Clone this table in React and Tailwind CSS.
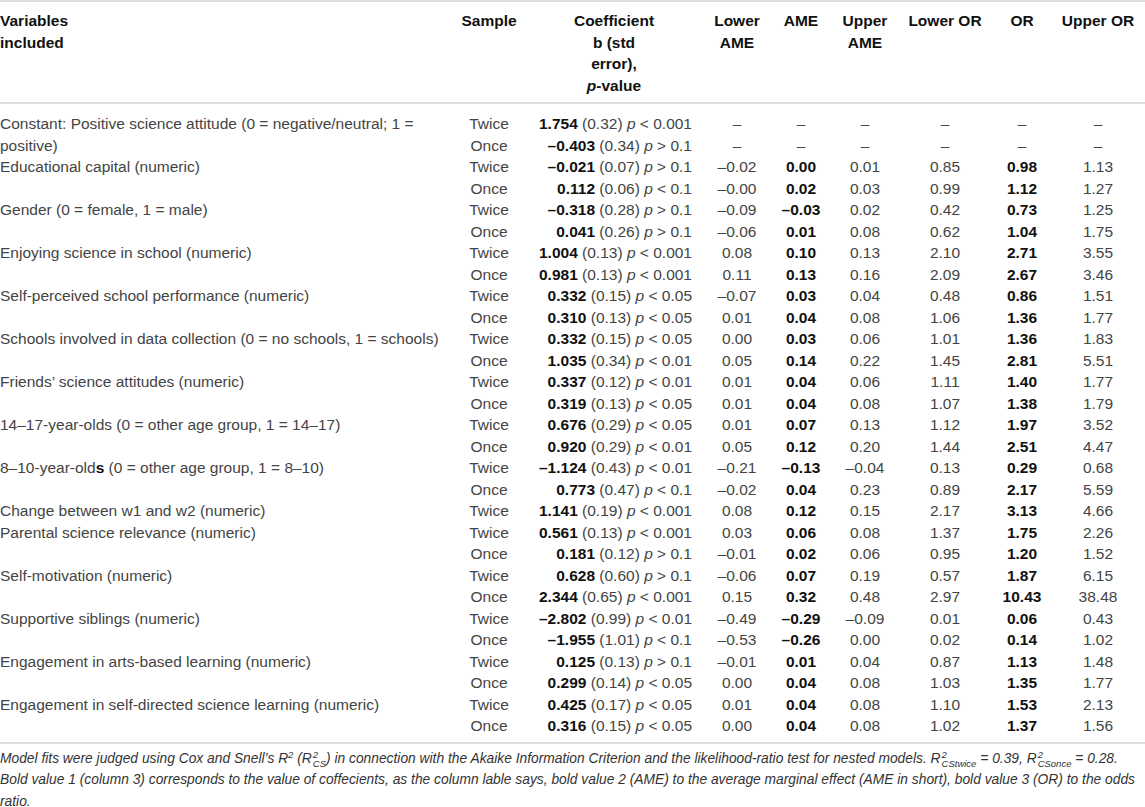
const D = '–';

const groups = [
  {
    label: 'Constant: Positive science attitude (0 = negative/neutral; 1 = positive)',
    rows: [
      ['Twice', '1.754', '0.32', '<', '0.001', D, D, D, D, D, D],
      ['Once', '–0.403', '0.34', '>', '0.1', D, D, D, D, D, D],
    ],
  },
  {
    label: 'Educational capital (numeric)',
    rows: [
      ['Twice', '–0.021', '0.07', '>', '0.1', '–0.02', '0.00', '0.01', '0.85', '0.98', '1.13'],
      ['Once', '0.112', '0.06', '<', '0.1', '–0.00', '0.02', '0.03', '0.99', '1.12', '1.27'],
    ],
  },
  {
    label: 'Gender (0 = female, 1 = male)',
    rows: [
      ['Twice', '–0.318', '0.28', '>', '0.1', '–0.09', '–0.03', '0.02', '0.42', '0.73', '1.25'],
      ['Once', '0.041', '0.26', '>', '0.1', '–0.06', '0.01', '0.08', '0.62', '1.04', '1.75'],
    ],
  },
  {
    label: 'Enjoying science in school (numeric)',
    rows: [
      ['Twice', '1.004', '0.13', '<', '0.001', '0.08', '0.10', '0.13', '2.10', '2.71', '3.55'],
      ['Once', '0.981', '0.13', '<', '0.001', '0.11', '0.13', '0.16', '2.09', '2.67', '3.46'],
    ],
  },
  {
    label: 'Self-perceived school performance (numeric)',
    rows: [
      ['Twice', '0.332', '0.15', '<', '0.05', '–0.07', '0.03', '0.04', '0.48', '0.86', '1.51'],
      ['Once', '0.310', '0.13', '<', '0.05', '0.01', '0.04', '0.08', '1.06', '1.36', '1.77'],
    ],
  },
  {
    label: 'Schools involved in data collection (0 = no schools, 1 = schools)',
    rows: [
      ['Twice', '0.332', '0.15', '<', '0.05', '0.00', '0.03', '0.06', '1.01', '1.36', '1.83'],
      ['Once', '1.035', '0.34', '<', '0.01', '0.05', '0.14', '0.22', '1.45', '2.81', '5.51'],
    ],
  },
  {
    label: 'Friends’ science attitudes (numeric)',
    rows: [
      ['Twice', '0.337', '0.12', '<', '0.01', '0.01', '0.04', '0.06', '1.11', '1.40', '1.77'],
      ['Once', '0.319', '0.13', '<', '0.05', '0.01', '0.04', '0.08', '1.07', '1.38', '1.79'],
    ],
  },
  {
    label: '14–17-year-olds (0 = other age group, 1 = 14–17)',
    rows: [
      ['Twice', '0.676', '0.29', '<', '0.05', '0.01', '0.07', '0.13', '1.12', '1.97', '3.52'],
      ['Once', '0.920', '0.29', '<', '0.01', '0.05', '0.12', '0.20', '1.44', '2.51', '4.47'],
    ],
  },
  {
    label: (
      <>
        8–10-year-old<b className="font-bold text-[#111]">s</b> (0 = other age group, 1 = 8–10)
      </>
    ),
    rows: [
      ['Twice', '–1.124', '0.43', '<', '0.01', '–0.21', '–0.13', '–0.04', '0.13', '0.29', '0.68'],
      ['Once', '0.773', '0.47', '<', '0.1', '–0.02', '0.04', '0.23', '0.89', '2.17', '5.59'],
    ],
  },
  {
    label: 'Change between w1 and w2 (numeric)',
    rows: [['Twice', '1.141', '0.19', '<', '0.001', '0.08', '0.12', '0.15', '2.17', '3.13', '4.66']],
  },
  {
    label: 'Parental science relevance (numeric)',
    rows: [
      ['Twice', '0.561', '0.13', '<', '0.001', '0.03', '0.06', '0.08', '1.37', '1.75', '2.26'],
      ['Once', '0.181', '0.12', '>', '0.1', '–0.01', '0.02', '0.06', '0.95', '1.20', '1.52'],
    ],
  },
  {
    label: 'Self-motivation (numeric)',
    rows: [
      ['Twice', '0.628', '0.60', '>', '0.1', '–0.06', '0.07', '0.19', '0.57', '1.87', '6.15'],
      ['Once', '2.344', '0.65', '<', '0.001', '0.15', '0.32', '0.48', '2.97', '10.43', '38.48'],
    ],
  },
  {
    label: 'Supportive siblings (numeric)',
    rows: [
      ['Twice', '–2.802', '0.99', '<', '0.01', '–0.49', '–0.29', '–0.09', '0.01', '0.06', '0.43'],
      ['Once', '–1.955', '1.01', '<', '0.1', '–0.53', '–0.26', '0.00', '0.02', '0.14', '1.02'],
    ],
  },
  {
    label: 'Engagement in arts-based learning (numeric)',
    rows: [
      ['Twice', '0.125', '0.13', '>', '0.1', '–0.01', '0.01', '0.04', '0.87', '1.13', '1.48'],
      ['Once', '0.299', '0.14', '<', '0.05', '0.00', '0.04', '0.08', '1.03', '1.35', '1.77'],
    ],
  },
  {
    label: 'Engagement in self-directed science learning (numeric)',
    rows: [
      ['Twice', '0.425', '0.17', '<', '0.05', '0.01', '0.04', '0.08', '1.10', '1.53', '2.13'],
      ['Once', '0.316', '0.15', '<', '0.05', '0.00', '0.04', '0.08', '1.02', '1.37', '1.56'],
    ],
  },
];

const cols = 'grid grid-cols-[455px_68px_182px_64px_64px_64px_96px_58px_94px]';

// stacked super/subscript, e.g. R with 2 over CS
function R2({ sub }) {
  return (
    <span className="whitespace-nowrap">
      R
      <span className="inline-block align-middle text-left text-[9.5px] leading-[9px] ml-[1px]">
        2
        <br />
        {sub}
      </span>
    </span>
  );
}

function Bold({ v }) {
  if (v === D) return <span>{D}</span>;
  return <b className="font-bold text-[#111]">{v}</b>;
}

export default function App() {
  return (
    <div className="w-[1145px] bg-white font-['Liberation_Sans',Arial,sans-serif] text-[15.5px] text-[#444]">
      {/* Header */}
      <div className={`${cols} border-t-2 border-b-2 border-[#dedede] pt-[8px] pb-[6px] font-bold text-[#111] leading-[21.5px]`}>
        <div>
          Variables
          <br />
          included
        </div>
        <div className="text-center">Sample</div>
        <div className="text-center">
          Coefficient
          <br />
          b (std
          <br />
          error),
          <br />
          <i>p</i>-value
        </div>
        <div className="text-center">
          Lower
          <br />
          AME
        </div>
        <div className="text-center">AME</div>
        <div className="text-center">
          Upper
          <br />
          AME
        </div>
        <div className="text-center">Lower OR</div>
        <div className="text-center">OR</div>
        <div className="text-center">Upper OR</div>
      </div>

      {/* Body */}
      <div className={`${cols} auto-rows-[21.5px] leading-[21.5px] pt-[9px] pb-[5px] border-b-2 border-[#dedede]`}>
        {groups.map((g, gi) => [
          <div key={'l' + gi} className={g.rows.length === 2 ? 'row-span-2 pr-2' : 'pr-2'}>
            {g.label}
          </div>,
          ...g.rows.map((r, ri) => [
            <div key={`s${gi}-${ri}`} className="text-center">{r[0]}</div>,
            <div key={`c${gi}-${ri}`} className="text-right pr-[13px] whitespace-nowrap">
              <b className="font-bold text-[#111]">{r[1]}</b> ({r[2]}) <i>p</i> {r[3]} {r[4]}
            </div>,
            <div key={`la${gi}-${ri}`} className="text-center">{r[5]}</div>,
            <div key={`a${gi}-${ri}`} className="text-center"><Bold v={r[6]} /></div>,
            <div key={`ua${gi}-${ri}`} className="text-center">{r[7]}</div>,
            <div key={`lo${gi}-${ri}`} className="text-center">{r[8]}</div>,
            <div key={`o${gi}-${ri}`} className="text-center"><Bold v={r[9]} /></div>,
            <div key={`uo${gi}-${ri}`} className="text-center">{r[10]}</div>,
          ]),
        ])}
      </div>

      {/* Footnote */}
      <div className="pt-[4px] italic text-[13.8px] leading-[21.5px] text-[#333]">
        <p>
          Model fits were judged using Cox and Snell’s R<sup className="text-[9.5px]">2</sup> (<R2 sub="CS" />) in connection
          with the Akaike Information Criterion and the likelihood-ratio test for nested models. <R2 sub="CStwice" /> = 0.39,{' '}
          <R2 sub="CSonce" /> = 0.28.
        </p>
        <p>
          Bold value 1 (column 3) corresponds to the value of coffecients, as the column lable says, bold value 2 (AME) to
          the average marginal effect (AME in short), bold value 3 (OR) to the odds ratio.
        </p>
      </div>
    </div>
  );
}
